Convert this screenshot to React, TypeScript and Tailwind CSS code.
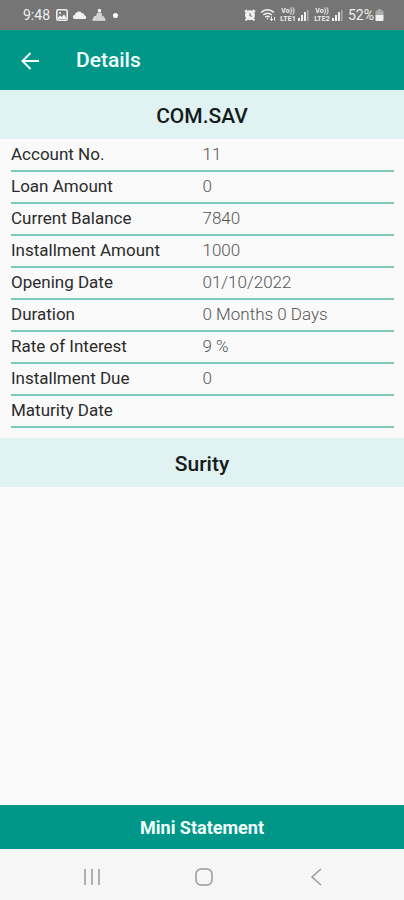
const details = [
  { label: "Account No.", value: "11" },
  { label: "Loan Amount", value: "0" },
  { label: "Current Balance", value: "7840" },
  { label: "Installment Amount", value: "1000" },
  { label: "Opening Date", value: "01/10/2022" },
  { label: "Duration", value: "0 Months 0 Days" },
  { label: "Rate of Interest", value: "9 %" },
  { label: "Installment Due", value: "0" },
  { label: "Maturity Date", value: "" },
];

function SimSignal({ sim }: { sim: string }) {
  return (
    <div className="flex items-center gap-0.5">
      <div className="w-4 text-center text-[7px] leading-[8px] font-bold">
        <p>Vo))</p>
        <p>{sim}</p>
      </div>
      <svg className="h-3 w-3" viewBox="0 0 12 12" fill="currentColor">
        <path d="M0 9h2v3H0zM3 6h2v6H3zM6 3h2v9H6z" />
        <path d="M9 1h1.5v11H9z" opacity="0.45" />
      </svg>
    </div>
  );
}

function StatusBar() {
  return (
    <div className="flex h-[30px] items-center justify-between bg-[#757575] pr-5 pl-[23px] text-[#f0f0f0]">
      <div className="flex items-center gap-[5px]">
        <span className="text-sm">9:48</span>

        <svg className="ml-px h-3 w-3" viewBox="0 0 12 12" fill="none" stroke="currentColor">
          <rect x="0.8" y="0.8" width="10.4" height="10.4" rx="1.5" strokeWidth="1.6" />
          <path d="M2 10V8.5l2-2.2 1.7 1.8L8 5.2l2.2 3.3V10z" fill="currentColor" stroke="none" />
          <circle cx="4" cy="4" r="1.1" fill="currentColor" stroke="none" />
        </svg>

        <svg className="h-3 w-[14px]" viewBox="0 0 14 12" fill="currentColor">
          <path d="M2 10a2 2 0 0 1-.3-4A4.200 4.200 0 0 1 9 4a3 3 0 0 1 2.600 2.500A1.800 1.800 0 0 1 12 10z" />
        </svg>

        <svg className="h-[14px] w-[14px]" viewBox="0 0 14 14" fill="currentColor">
          <circle cx="7.5" cy="2.500" r="1.800" />
          <path d="M4 8 5 5l2.500-1L10 5.500V9l1.500-1.500L13.500 12H.5L2 8z" opacity="0.75" />
          <path d="M.5 11.500h13v1.500H.5z" opacity="0.65" />
        </svg>

        <span className="ml-0.5 h-[5px] w-[5px] rounded-full bg-white" />
      </div>

      <div className="flex items-center gap-1">
        <svg className="h-3 w-3" viewBox="0 0 12 12" fill="none" stroke="currentColor">
          <circle cx="6" cy="6.300" r="4" fill="currentColor" strokeWidth="2" />
          <path d="M1 3 3 1M11 3 9 1M1.500 11.500 3.500 9.500M10.500 11.500 8.500 9.500" strokeWidth="2" />
          <path d="M6 4v2.500l1.800 1" stroke="#757575" strokeWidth="1.100" />
        </svg>

        <svg className="h-[14px] w-4" viewBox="0 0 16 14" fill="none" stroke="currentColor" strokeWidth="1.500">
          <path d="M1 4.500a9 9 0 0 1 13 0M3.200 7a6 6 0 0 1 8.600 0M5.300 9.200a3 3 0 0 1 4.400 0" />
          <circle cx="7.500" cy="10.800" r="0.800" fill="currentColor" stroke="none" />
          <path d="M11.500 8.500v4M10 11l1.500 1.600L13 11M14.500 12.500V9" strokeWidth="1" />
        </svg>

        <SimSignal sim="LTE1" />
        <SimSignal sim="LTE2" />

        <div className="flex items-center gap-px">
          <span className="text-sm">52%</span>
          <svg className="h-3 w-[9px]" viewBox="0 0 9 12" fill="currentColor">
            <path d="M3 0h3v1.500h1.500q1 0 1 1V6h-8V2.500q0-1 1-1H3z" opacity="0.45" />
            <path d="M.5 6h8v5q0 1-1 1h-6q-1 0-1-1z" />
          </svg>
        </div>
      </div>
    </div>
  );
}

function SectionTitle({ title }: { title: string }) {
  return (
    <h2 className="bg-[#e0f2f1] pt-3.5 pb-2.5 text-center text-[21px] leading-[25px] font-medium text-[#151b1b]">
      {title}
    </h2>
  );
}

export default function App() {
  return (
    <div className="flex min-h-screen flex-col bg-[#fafafa] font-[Roboto,sans-serif]">
      <StatusBar />

      <header className="flex h-[60px] items-center gap-9 bg-[#009788] px-5 pt-0.5 text-[#f2fffd]">
        <button type="button" aria-label="Go back">
          <svg className="h-5 w-5" viewBox="0 0 20 20" fill="none" stroke="currentColor" strokeWidth="2">
            <path d="M19 10H3M10.500 2 2.500 10l8 8" />
          </svg>
        </button>
        <h1 className="text-[21px] font-medium">Details</h1>
      </header>

      <main className="flex flex-1 flex-col">
        <SectionTitle title="COM.SAV" />

        <div className="px-2.5 pb-2.5 pl-[11px]">
          <table className="w-full table-fixed border-collapse text-left text-[17px] leading-7">
            <tbody>
              {details.map((item) => (
                <tr key={item.label} className="h-8 border-b-2 border-[#7fcabb]">
                  <th scope="row" className="w-1/2 p-0 pb-0.5 font-normal text-[#2b2b2b]">
                    {item.label}
                  </th>
                  <td className="w-1/2 p-0 pb-0.5 font-light text-[#555555]">{item.value}</td>
                </tr>
              ))}
            </tbody>
          </table>
        </div>

        <SectionTitle title="Surity" />
      </main>

      <button type="button" className="h-11 bg-[#009788] pt-0.5 text-lg font-bold text-[#f2fffd]">
        Mini Statement
      </button>

      <nav className="grid h-[51px] grid-cols-3 items-center justify-items-center bg-[#f6f6f6] pt-1 pr-8 pl-9 text-[#999999]">
        <button type="button" aria-label="Recent apps">
          <svg className="h-[18px] w-[18px]" viewBox="0 0 18 18" stroke="currentColor" strokeWidth="1.500">
            <path d="M2 1v16M9 1v16M16 1v16" />
          </svg>
        </button>
        <button type="button" aria-label="Home">
          <svg className="h-[18px] w-[18px]" viewBox="0 0 18 18" fill="none" stroke="currentColor" strokeWidth="1.500">
            <rect x="1" y="1" width="16" height="16" rx="5" />
          </svg>
        </button>
        <button type="button" aria-label="Back">
          <svg className="h-[18px] w-[18px]" viewBox="0 0 18 18" fill="none" stroke="currentColor" strokeWidth="1.500">
            <path d="M14 1 5 9l9 8" />
          </svg>
        </button>
      </nav>
    </div>
  );
}
